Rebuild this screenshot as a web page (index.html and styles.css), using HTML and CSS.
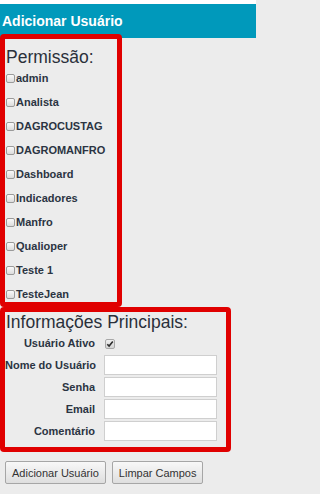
FILE: index.html
```html
<!DOCTYPE html>
<html lang="pt-BR">
<head>
<meta charset="utf-8">
<title>Adicionar Usuário</title>
<link rel="stylesheet" href="styles.css">
</head>
<body>
<header class="titlebar">Adicionar Usuário</header>

<section class="group perms">
  <div class="legend">Permissão:</div>
  <ul class="perm-list">
    <li><span class="cb"></span>admin</li>
    <li><span class="cb"></span>Analista</li>
    <li><span class="cb"></span>DAGROCUSTAG</li>
    <li><span class="cb"></span>DAGROMANFRO</li>
    <li><span class="cb"></span>Dashboard</li>
    <li><span class="cb"></span>Indicadores</li>
    <li><span class="cb"></span>Manfro</li>
    <li><span class="cb"></span>Qualioper</li>
    <li><span class="cb"></span>Teste 1</li>
    <li><span class="cb"></span>TesteJean</li>
  </ul>
</section>

<section class="group info">
  <div class="legend">Informações Principais:</div>
  <div class="form-grid">
    <span class="lbl first">Usuário Ativo</span>
    <span class="cb checked"><svg width="8" height="8" viewBox="0 0 8 8"><path d="M1.3 4.2 L3.1 6 L6.8 1.6" fill="none" stroke="#2b2b2b" stroke-width="1.6"/></svg></span>
    <span class="lbl">Nome do Usuário</span><span class="field"></span>
    <span class="lbl">Senha</span><span class="field"></span>
    <span class="lbl">Email</span><span class="field"></span>
    <span class="lbl">Comentário</span><span class="field"></span>
  </div>
</section>

<div class="actions">
  <button class="btn">Adicionar Usuário</button>
  <button class="btn">Limpar Campos</button>
</div>
</body>
</html>
```

FILE: styles.css
```css
html { background: #ececec; }
body {
  margin: 0;
  width: 256px;
  border-top: 4px solid #ffffff;
  font-family: "Liberation Sans", Arial, sans-serif;
  color: #2b3442;
}
.titlebar {
  height: 34px;
  line-height: 34px;
  background: #0099bb;
  color: #ffffff;
  font-weight: bold;
  font-size: 14px;
  padding-left: 2px;
}
.group {
  box-sizing: border-box;
  border: 5px solid #e00000;
  border-radius: 4px;
}
.perms {
  width: 122px;
  margin-top: -4px;
  padding: 9px 0 1px 0;
}
.info {
  width: 231px;
  padding: 1px 0 6px 0;
}
.legend {
  font-size: 17.5px;
  line-height: 18px;
  padding-left: 1px;
  color: #2a303a;
}
.perm-list {
  list-style: none;
  margin: 5px 0 0 0;
  padding: 0;
  display: flex;
  flex-direction: column;
  gap: 10px;
}
.perm-list li {
  display: flex;
  align-items: center;
  height: 14px;
  font-size: 11px;
  font-weight: bold;
}
.cb {
  box-sizing: border-box;
  display: inline-flex;
  align-items: center;
  justify-content: center;
  width: 9px;
  height: 9px;
  border: 1px solid #9a9a9a;
  border-radius: 2px;
  background: linear-gradient(#fafafa, #dcdcdc);
  margin: 0 1px 0 1px;
  flex: none;
}
.cb.checked {
  width: 10px;
  height: 10px;
  margin: 3px 0 0 1px;
  background: linear-gradient(#eeeeee, #d4d4d4);
  border-color: #a8a8a8;
}
.form-grid {
  display: grid;
  grid-template-columns: 90px 113px;
  grid-template-rows: 22px repeat(4, 20px);
  column-gap: 9px;
  row-gap: 2px;
  align-items: center;
}
.lbl {
  text-align: right;
  font-size: 11px;
  font-weight: bold;
  white-space: nowrap;
}
.lbl.first { padding-top: 2px; }
.field {
  box-sizing: border-box;
  height: 20px;
  background: #ffffff;
  border: 1px solid #cfcfcf;
}
.actions {
  display: flex;
  gap: 6px;
  margin: 9px 0 0 5px;
}
.btn {
  height: 23px;
  padding: 0 6px;
  font-family: "Liberation Sans", Arial, sans-serif;
  font-size: 11px;
  color: #333333;
  border: 1px solid #a6a6a6;
  border-radius: 2px;
  background: linear-gradient(#f8f8f8, #dedede);
}
```
